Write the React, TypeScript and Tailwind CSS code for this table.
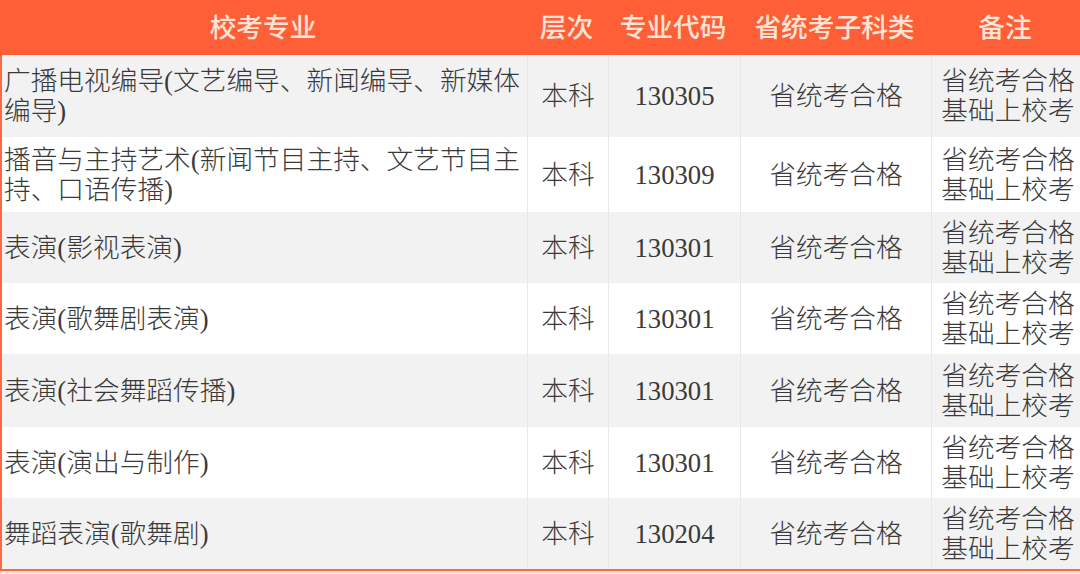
import React from 'react';

type Row = {
  name: string;
  code: string;
  height: string;
  bg: string;
};

const rows: Row[] = [
  { name: '广播电视编导(文艺编导、新闻编导、新媒体编导)', code: '130305', height: 'h-[82px]', bg: 'bg-[#f2f2f2]' },
  { name: '播音与主持艺术(新闻节目主持、文艺节目主持、口语传播)', code: '130309', height: 'h-[75px]', bg: 'bg-white' },
  { name: '表演(影视表演)', code: '130301', height: 'h-[71px]', bg: 'bg-[#f2f2f2]' },
  { name: '表演(歌舞剧表演)', code: '130301', height: 'h-[71px]', bg: 'bg-white' },
  { name: '表演(社会舞蹈传播)', code: '130301', height: 'h-[73px]', bg: 'bg-[#f2f2f2]' },
  { name: '表演(演出与制作)', code: '130301', height: 'h-[71px]', bg: 'bg-white' },
  { name: '舞蹈表演(歌舞剧)', code: '130204', height: 'h-[71px]', bg: 'bg-[#f2f2f2]' },
];

const grid = 'grid grid-cols-[526px_81px_132px_191px_150px]';
const cell = 'flex items-center justify-center border-r border-[#e8e8e8]';

const App: React.FC = () => {
  return (
    <div
      className="w-[1080px] h-[574px] overflow-hidden bg-[#fbe7dd] text-[26.7px] leading-[30px] text-[#3a3a3a]"
      style={{ fontFamily: '"Liberation Serif", "Noto Sans CJK SC", serif' }}
    >
      {/* Header */}
      <div className={`${grid} h-[55px] bg-[#fe5f37] text-[#fde3d5] font-medium`}>
        <div className="flex items-center justify-center">校考专业</div>
        <div className="flex items-center justify-center">层次</div>
        <div className="flex items-center justify-center">专业代码</div>
        <div className="flex items-center justify-center">省统考子科类</div>
        <div className="flex items-center justify-center">备注</div>
      </div>

      {/* Body */}
      <div className="border-l-2 border-b-2 border-[#fb6a44] font-light">
        {rows.map((row, i) => (
          <div key={i} className={`${grid} ${row.height} ${row.bg}`}>
            <div className="flex items-center border-r border-[#e8e8e8] pl-[2px] pr-1">
              <span>{row.name}</span>
            </div>
            <div className={cell}>本科</div>
            <div className={cell}>{row.code}</div>
            <div className={cell}>省统考合格</div>
            <div className="flex flex-col items-center justify-center pl-[2px]">
              <span>省统考合格</span>
              <span>基础上校考</span>
            </div>
          </div>
        ))}
      </div>
    </div>
  );
};

export default App;
